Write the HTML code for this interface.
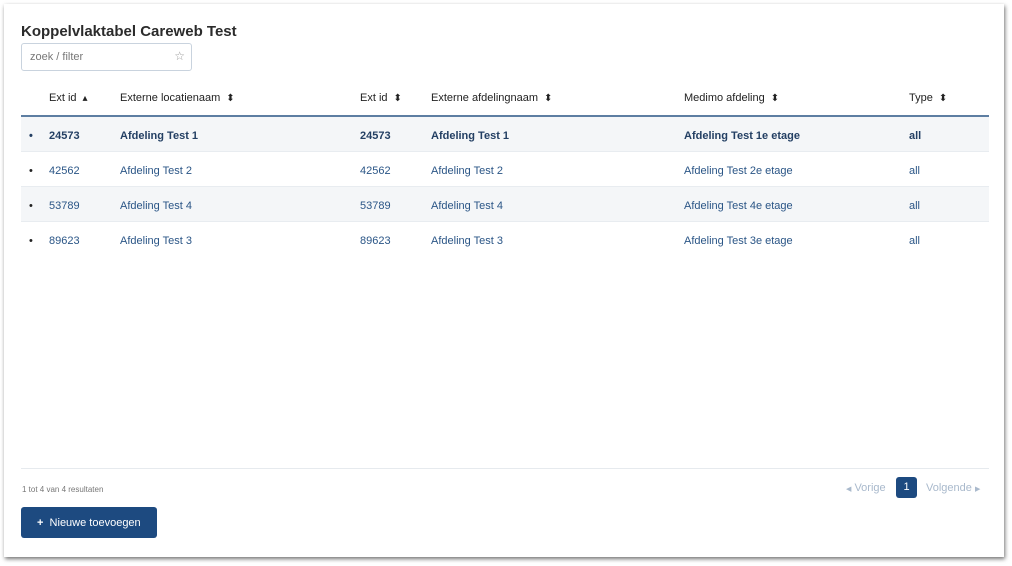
<!DOCTYPE html>
<html><head><style>
*{margin:0;padding:0;box-sizing:border-box}
body{width:1012px;height:566px;background:#fff;font-family:"Liberation Sans",sans-serif;position:relative;overflow:hidden}
.card{position:absolute;left:4px;top:4px;width:1000px;height:553px;background:#fff;box-shadow:1px 2px 4px rgba(0,0,0,.55)}
h1{position:absolute;left:17px;top:19px;font-size:15px;font-weight:bold;color:#2b2b2b}
.search{position:absolute;left:17px;top:39px;width:171px;height:28px;border:1px solid #c9d3de;border-radius:3px;font-size:11px;color:#777;padding:7px 8px}
.search span{position:absolute;right:6px;top:5px;color:#999;font-size:12px}
.th{position:absolute;top:88px;font-size:11px;color:#222}
.sort{font-size:10px;margin-left:6px;vertical-align:0px}
.hline{position:absolute;left:17px;top:111px;width:968px;height:2px;background:#5d7ea2}
.row{position:absolute;left:17px;width:968px;height:35px;border-bottom:1px solid #e8ecf0;font-size:11px;color:#2a5586}
.row div{position:absolute;top:13px}
.row.g{background:#f4f6f8}
.row.b{font-weight:bold;color:#233f63}
.foot{position:absolute;left:17px;top:464px;width:968px;height:1px;background:#e6eaee}
.cnt{position:absolute;left:18px;top:481px;font-size:8px;color:#777}
.btn{position:absolute;left:17px;top:503px;width:136px;height:31px;background:#1d4a80;border-radius:3px;color:#fff;font-size:11px;padding:10px 0 0 16px}
.pg{position:absolute;top:478px;font-size:11px;color:#a9b9cc}
.p1{position:absolute;left:892px;top:473px;width:21px;height:21px;background:#1d4a80;border-radius:3px;color:#fff;font-size:11px;text-align:center;line-height:21px}
</style></head><body>
<div class="card">
<h1>Koppelvlaktabel Careweb Test</h1>
<div class="search">zoek / filter<span>☆</span></div>
<div class="th" style="left:45px">Ext id<span class="sort">▴</span></div>
<div class="th" style="left:116px">Externe locatienaam<span class="sort">⬍</span></div>
<div class="th" style="left:356px">Ext id<span class="sort">⬍</span></div>
<div class="th" style="left:427px">Externe afdelingnaam<span class="sort">⬍</span></div>
<div class="th" style="left:680px">Medimo afdeling<span class="sort">⬍</span></div>
<div class="th" style="left:905px">Type<span class="sort">⬍</span></div>
<div class="hline"></div>
<div class="row g b" style="top:113px"><div style="left:8px">•</div><div style="left:28px">24573</div><div style="left:99px">Afdeling Test 1</div><div style="left:339px">24573</div><div style="left:410px">Afdeling Test 1</div><div style="left:663px">Afdeling Test 1e etage</div><div style="left:888px">all</div></div>
<div class="row" style="top:148px"><div style="left:8px;color:#222">•</div><div style="left:28px">42562</div><div style="left:99px">Afdeling Test 2</div><div style="left:339px">42562</div><div style="left:410px">Afdeling Test 2</div><div style="left:663px">Afdeling Test 2e etage</div><div style="left:888px">all</div></div>
<div class="row g" style="top:183px"><div style="left:8px;color:#222">•</div><div style="left:28px">53789</div><div style="left:99px">Afdeling Test 4</div><div style="left:339px">53789</div><div style="left:410px">Afdeling Test 4</div><div style="left:663px">Afdeling Test 4e etage</div><div style="left:888px">all</div></div>
<div class="row" style="top:218px;border-bottom:none"><div style="left:8px;color:#222">•</div><div style="left:28px">89623</div><div style="left:99px">Afdeling Test 3</div><div style="left:339px">89623</div><div style="left:410px">Afdeling Test 3</div><div style="left:663px">Afdeling Test 3e etage</div><div style="left:888px">all</div></div>
<div class="foot"></div>
<div class="cnt">1 tot 4 van 4 resultaten</div>
<div class="pg" style="left:842px"><span style="font-size:7px">◀</span> Vorige</div>
<div class="p1">1</div>
<div class="pg" style="left:922px">Volgende <span style="font-size:7px">▶</span></div>
<div class="btn"><b>+</b>&nbsp; Nieuwe toevoegen</div>
</div>
</body></html>
